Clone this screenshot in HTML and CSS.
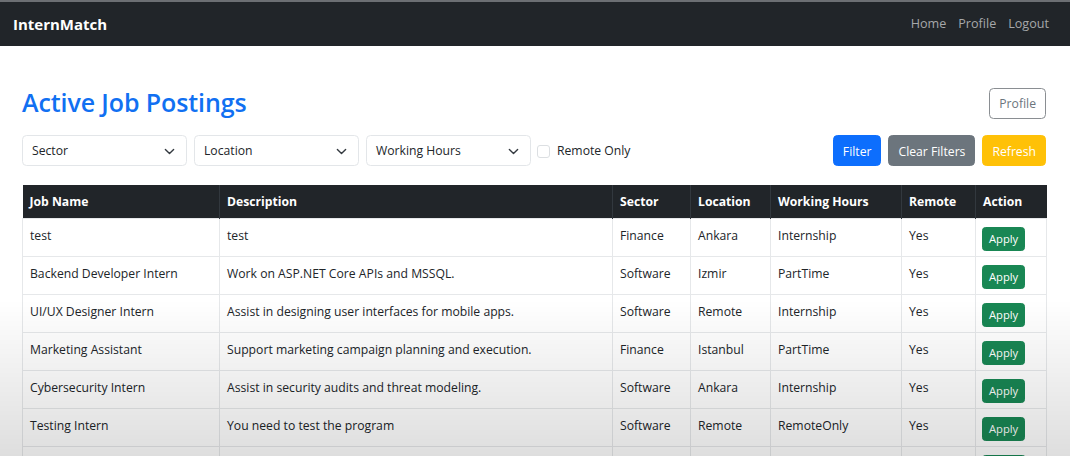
FILE: index.html
```html
<!DOCTYPE html>
<html lang="en">
<head>
<meta charset="utf-8">
<title>InternMatch</title>
<link rel="stylesheet" href="styles.css">
</head>
<body>
<nav class="navbar">
  <span class="brand">InternMatch</span>
  <div class="nav-links">
    <a href="#">Home</a>
    <a href="#">Profile</a>
    <a href="#">Logout</a>
  </div>
</nav>
<main class="container">
  <div class="title-row">
    <h2 class="title">Active Job Postings</h2>
    <button class="btn btn-outline">Profile</button>
  </div>
  <div class="filter-row">
    <div class="filters">
      <div class="select"><span>Sector</span><svg viewBox="0 0 16 16" width="12" height="12"><path d="M2 5l6 6 6-6" fill="none" stroke="#343a40" stroke-width="2" stroke-linecap="round" stroke-linejoin="round"/></svg></div>
      <div class="select"><span>Location</span><svg viewBox="0 0 16 16" width="12" height="12"><path d="M2 5l6 6 6-6" fill="none" stroke="#343a40" stroke-width="2" stroke-linecap="round" stroke-linejoin="round"/></svg></div>
      <div class="select"><span>Working Hours</span><svg viewBox="0 0 16 16" width="12" height="12"><path d="M2 5l6 6 6-6" fill="none" stroke="#343a40" stroke-width="2" stroke-linecap="round" stroke-linejoin="round"/></svg></div>
      <label class="check"><span class="box"></span>Remote Only</label>
    </div>
    <div class="actions">
      <button class="btn btn-primary">Filter</button>
      <button class="btn btn-secondary">Clear Filters</button>
      <button class="btn btn-warning">Refresh</button>
    </div>
  </div>
  <table class="jobs">
    <colgroup>
      <col class="c1"><col class="c2"><col class="c3"><col class="c4"><col class="c5"><col class="c6"><col class="c7">
    </colgroup>
    <thead>
      <tr><th>Job Name</th><th>Description</th><th>Sector</th><th>Location</th><th>Working Hours</th><th>Remote</th><th>Action</th></tr>
    </thead>
    <tbody>
      <tr><td>test</td><td>test</td><td>Finance</td><td>Ankara</td><td>Internship</td><td>Yes</td><td><button class="btn-apply">Apply</button></td></tr>
      <tr><td>Backend Developer Intern</td><td>Work on ASP.NET Core APIs and MSSQL.</td><td>Software</td><td>Izmir</td><td>PartTime</td><td>Yes</td><td><button class="btn-apply">Apply</button></td></tr>
      <tr><td>UI/UX Designer Intern</td><td>Assist in designing user interfaces for mobile apps.</td><td>Software</td><td>Remote</td><td>Internship</td><td>Yes</td><td><button class="btn-apply">Apply</button></td></tr>
      <tr><td>Marketing Assistant</td><td>Support marketing campaign planning and execution.</td><td>Finance</td><td>Istanbul</td><td>PartTime</td><td>Yes</td><td><button class="btn-apply">Apply</button></td></tr>
      <tr><td>Cybersecurity Intern</td><td>Assist in security audits and threat modeling.</td><td>Software</td><td>Ankara</td><td>Internship</td><td>Yes</td><td><button class="btn-apply">Apply</button></td></tr>
      <tr><td>Testing Intern</td><td>You need to test the program</td><td>Software</td><td>Remote</td><td>RemoteOnly</td><td>Yes</td><td><button class="btn-apply">Apply</button></td></tr>
      <tr><td>&nbsp;</td><td></td><td></td><td></td><td></td><td></td><td><button class="btn-apply btn-empty" aria-label="Apply"></button></td></tr>
    </tbody>
  </table>
</main>
<div class="fade"></div>
</body>
</html>
```
FILE: styles.css
```css
* { box-sizing: border-box; }
html, body { margin: 0; padding: 0; }
body {
  font-family: "Open Sans", "Noto Sans", "Liberation Sans", sans-serif;
  font-size: 12.2px;
  line-height: 1.5;
  color: #212529;
  background: #fff;
  overflow: hidden;
  height: 456px;
}
.navbar {
  height: 46px;
  background: #212529;
  border-top: 2px solid #6c6f73;
  display: flex;
  align-items: center;
  justify-content: space-between;
  padding: 0 21px 0 13px;
}
.brand {
  color: #fff;
  font-weight: 700;
  font-size: 15px;
}
.nav-links { display: flex; gap: 12px; }
.nav-links a {
  color: #a6a8aa;
  text-decoration: none;
  font-size: 12.6px;
}
.container { padding: 41px 24px 0 22px; }
.title-row {
  display: flex;
  justify-content: space-between;
  align-items: center;
  height: 32px;
}
.title {
  margin: 0;
  font-size: 25px;
  font-weight: 600;
  color: #1170f2;
  letter-spacing: -0.1px;
}
.btn {
  font-family: inherit;
  font-size: 12.2px;
  height: 31px;
  padding: 1px 9px 0;
  border-radius: 4.5px;
  border: 1px solid transparent;
  color: #fff;
}
.btn-outline {
  background: #fff;
  border-color: #8a8e92;
  color: #6c757d;
  padding: 0 9px;
}
.filter-row {
  margin-top: 16px;
  display: flex;
  justify-content: space-between;
  align-items: center;
}
.filters { display: flex; align-items: center; gap: 7px; }
.select {
  width: 165px;
  height: 31px;
  border: 1px solid #e3e6e9;
  border-radius: 4.5px;
  display: flex;
  align-items: center;
  justify-content: space-between;
  padding: 2px 11px 0 9px;
  color: #212529;
}
.select svg { width: 11px; height: 11px; }
.check {
  display: flex;
  align-items: center;
  gap: 7px;
  margin-left: -1px;
  padding-top: 2px;
  color: #212529;
}
.box {
  width: 13px;
  height: 13px;
  border: 1px solid #dcdfe2;
  border-radius: 3px;
}
.actions { display: flex; gap: 7px; }
.btn-primary { background: #0d6efd; border-color: #0d6efd; }
.btn-secondary { background: #6c757d; border-color: #6c757d; }
.btn-warning { background: #ffc107; border-color: #ffc107; color: #fff; }
.jobs {
  margin-top: 19px;
  width: 1024px;
  border-collapse: collapse;
  table-layout: fixed;
}
.c1 { width: 197px; } .c2 { width: 393px; } .c3 { width: 78px; } .c4 { width: 80px; }
.c5 { width: 131px; } .c6 { width: 74px; } .c7 { width: 71px; }
.jobs th {
  background: #212529;
  color: #fff;
  text-align: left;
  font-weight: 700;
  height: 33px;
  padding: 2px 7px 0;
  border-left: 1px solid #32383e;
}
.jobs th:first-child { border-left: none; }
.jobs td {
  height: 38px;
  padding: 0 7px 1px;
  border: 1px solid #e6e8ea;
  vertical-align: middle;
  white-space: nowrap;
}
.btn-apply {
  font-family: inherit;
  font-size: 11.2px;
  background: #198754;
  border: 1px solid #198754;
  color: #fff;
  border-radius: 3.5px;
  height: 24px;
  padding: 0 6px;
  margin-left: -1px;
  margin-top: 4px;
}
.btn-empty { width: 44px; vertical-align: middle; }
.fade {
  position: fixed;
  left: 0;
  right: 0;
  top: 300px;
  bottom: 0;
  pointer-events: none;
  background: linear-gradient(to bottom, rgba(0,0,0,0) 0%, rgba(0,0,0,0.06) 45%, rgba(0,0,0,0.13) 100%);
}
```
